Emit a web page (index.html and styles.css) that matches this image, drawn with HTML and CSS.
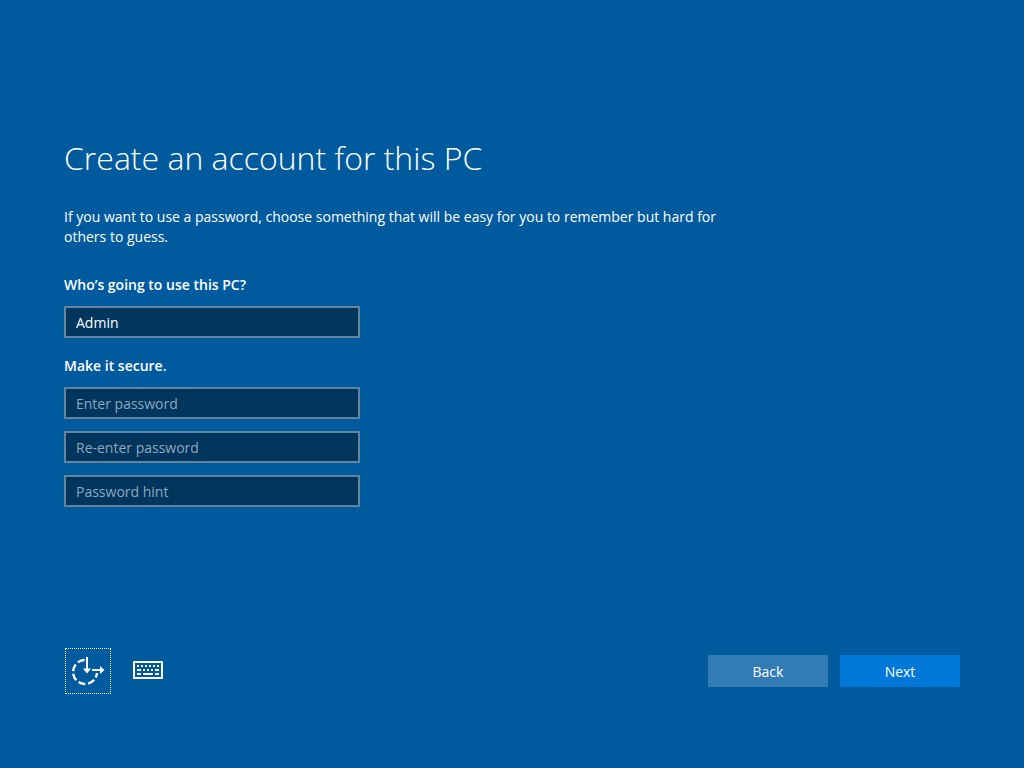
FILE: index.html
```html
<!DOCTYPE html>
<html lang="en">
<head>
<meta charset="utf-8">
<title>Create an account for this PC</title>
<link rel="stylesheet" href="styles.css">
</head>
<body>
<form class="setup">
  <main class="content">
    <h1 class="title">Create an account for this PC</h1>
    <p class="intro">If you want to use a password, choose something that will be easy for you to remember but hard for others to guess.</p>
    <div class="group">
      <label class="heading" for="user">Who’s going to use this PC?</label>
      <input class="field" id="user" type="text" value="Admin">
    </div>
    <div class="group">
      <label class="heading" for="password">Make it secure.</label>
      <input class="field" id="password" type="password" placeholder="Enter password">
      <input class="field" type="password" placeholder="Re-enter password" aria-label="Re-enter password">
      <input class="field" type="text" placeholder="Password hint" aria-label="Password hint">
    </div>
  </main>
  <footer class="footer">
    <div class="tools">
      <button class="tool tool-focused" type="button" aria-label="Ease of access">
        <svg width="46" height="46" viewBox="0 0 46 46" fill="none" stroke="#fff" stroke-width="2">
          <path d="M19.500 12A12 12 0 1 0 32 25" stroke-width="2.400" stroke-dasharray="7.200 2.800"/>
          <path d="M22 9V23M27 22H37"/>
          <path d="M18 20.500H26L22 25.500ZM35 18L39.500 22L35 26Z" fill="#fff" stroke="none"/>
        </svg>
      </button>
      <button class="tool" type="button" aria-label="On-screen keyboard">
        <svg width="30" height="20" viewBox="0 0 30 20" fill="none" stroke="#fff" stroke-width="2">
          <rect x="1" y="1" width="28" height="16"/>
          <path d="M4 5H6M8 5H10M12 5H14M16 5H18M20 5H22M24 5H26M4 9H8M10 9H12M14 9H16M18 9H20M22 9H26M4 13H8M10 13H20M22 13H26"/>
        </svg>
      </button>
    </div>
    <div class="actions">
      <button class="action" type="button">Back</button>
      <button class="action action-primary" type="submit">Next</button>
    </div>
  </footer>
</form>
</body>
</html>
```
FILE: styles.css
```css
* {
  box-sizing: border-box;
}

body {
  margin: 0;
  background: #005a9e;
  color: #fff;
  font: 14px/20px "Segoe UI", "Open Sans", sans-serif;
}

.setup {
  display: flex;
  flex-direction: column;
  justify-content: space-between;
  min-height: 100vh;
  padding: 133px 64px 74px;
}

.title {
  margin: 0 0 24px;
  font-size: 32px;
  font-weight: 300;
  line-height: 50px;
}

.intro {
  max-width: 672px;
  margin: 0 0 28px;
}

.group {
  display: flex;
  flex-direction: column;
  max-width: 296px;
  margin-bottom: 6px;
}

.heading {
  margin-bottom: 11px;
  font-weight: 600;
}

.field {
  width: 100%;
  height: 32px;
  margin: 0 0 12px;
  padding: 0 10px;
  border: 2px solid #66859c;
  border-radius: 0;
  outline: 0;
  background: #00355d;
  color: #fff;
  font: inherit;
}

.field::placeholder {
  color: #8fa9bd;
  opacity: 1;
}

.footer,
.tools,
.actions {
  display: flex;
  align-items: center;
}

.footer {
  justify-content: space-between;
}

.tools {
  gap: 14px;
  padding-left: 1px;
}

.actions {
  gap: 12px;
}

.tool {
  display: grid;
  place-items: center;
  width: 46px;
  height: 46px;
  padding: 0;
  border: 0;
  background: none;
}

.tool-focused {
  outline: 1px dotted #fff;
  outline-offset: -1px;
}

.action {
  width: 120px;
  height: 32px;
  padding: 2px 0 0;
  border: 0;
  background: #337bb5;
  color: #fff;
  font: inherit;
}

.action-primary {
  background: #0078d7;
}
```
